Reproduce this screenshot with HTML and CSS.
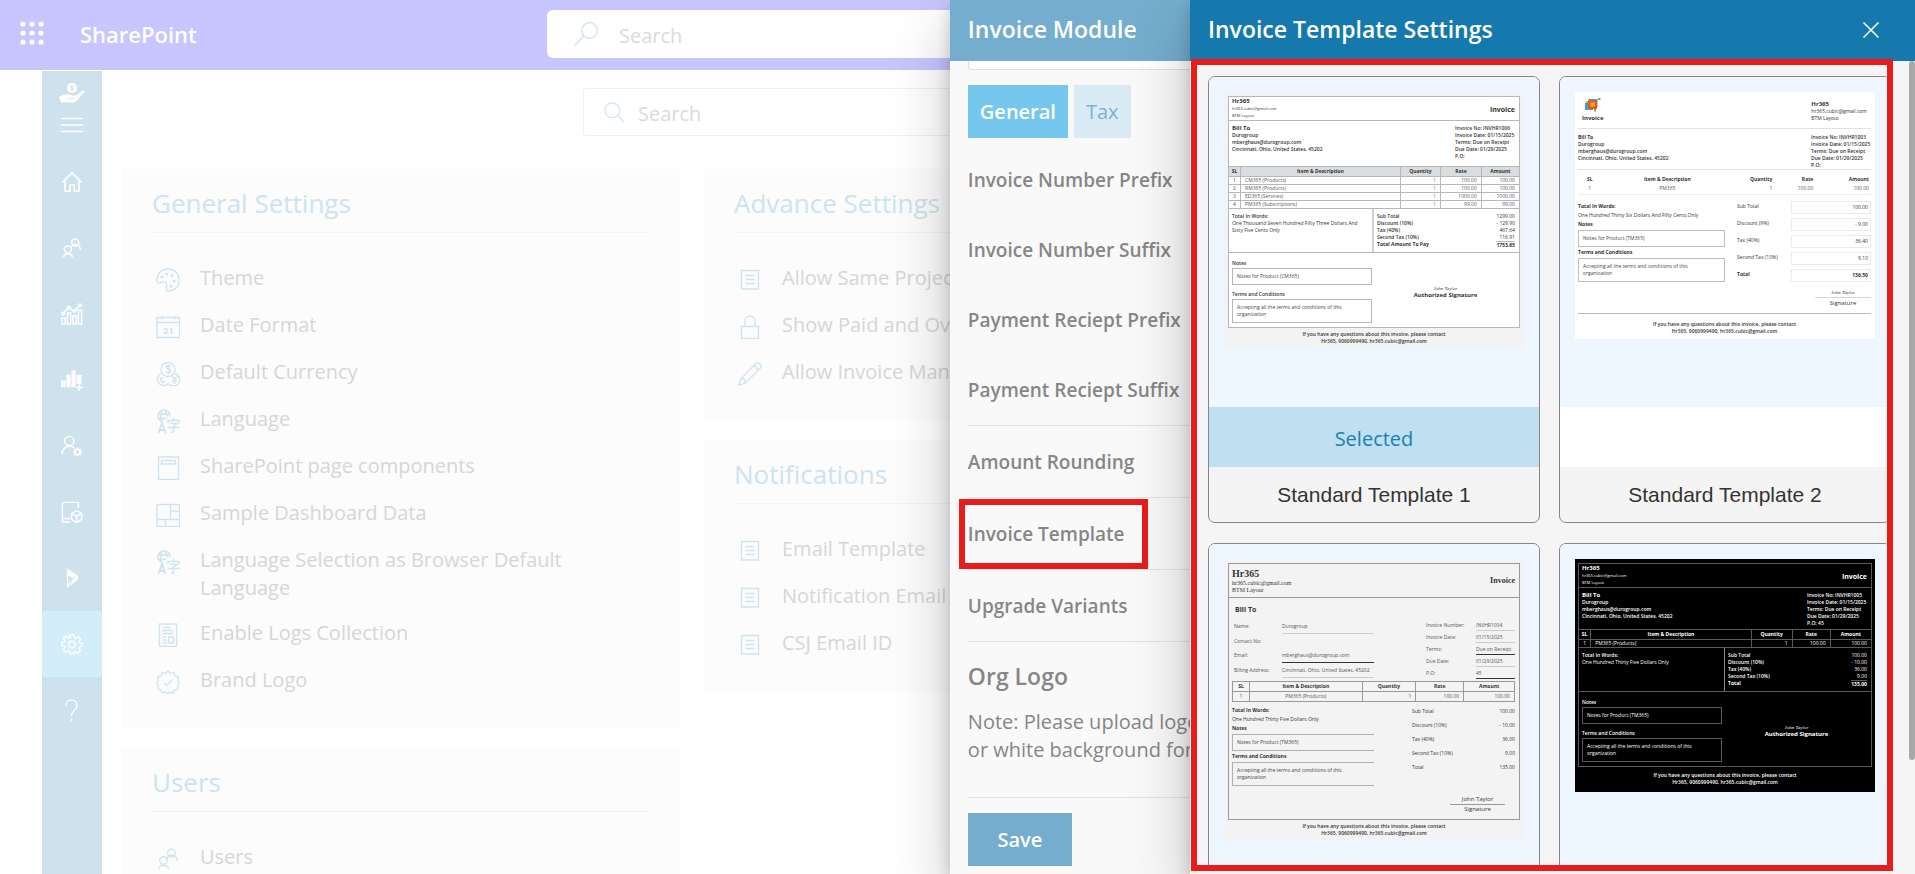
FILE: index.html
```html
<!DOCTYPE html>
<html lang="en">
<head>
<meta charset="utf-8">
<title>Invoice Template Settings</title>
<link rel="stylesheet" href="styles.css">
</head>
<body>
<svg class="defs" aria-hidden="true">
  <symbol id="i-people" viewBox="0 0 24 24"><circle cx="15.5" cy="6" r="3.8"/><circle cx="7.5" cy="13.5" r="3.8"/><path d="M2.5 22a5.200 5.200 0 0 1 10 0M10.500 13a5.200 5.200 0 0 1 10.500 1"/></symbol>
  <symbol id="i-lang" viewBox="0 0 24 24"><path d="M6.500 12.500A6 6 0 1 1 14 7.500M1.500 5h12M1.500 9.500h9M6 1.500c-2 3-2 8 0 11M9 1.500c1.500 2 2 4 2 6"/><path d="M2.500 24L6 14l3.500 10M3.700 21h4.600" stroke-width="1.800"/><path d="M17.500 9v2M12 14v-2.500h11V14M14 14.500h7l-3.500 3V23h-2.500M11.500 18.500h12" stroke-width="1.500"/></symbol>
  <symbol id="i-list" viewBox="0 0 24 24"><path d="M3.500 2.500h17v18.500h-17zM7.500 7.500h9M7.500 11.500h9M7.500 15.500h9"/></symbol>
  <symbol id="i-gear" viewBox="0 0 24 24"><path d="M10 2h4l.6 3 1.800.8L19 4l2.600 2.700-1.700 2.500.6 1.700 2.500.6v3l-2.700.7-.7 1.800 1.500 2.500-2.500 2.500-2.500-1.500-1.800.7L13.500 23h-3l-.8-2.800-1.800-.7-2.500 1.500L3 18.500 4.400 16l-.7-1.800L1 13.500v-3l2.700-.6.7-1.700L2.800 5.700 5 3.500l2.600 1.600L9.400 5z"/><circle cx="12" cy="12.500" r="3.600"/></symbol>
</svg>

<div class="page">
  <header class="topbar">
    <div class="brand">
      <button class="waffle" aria-label="App launcher"><svg viewBox="0 0 24 24"><g fill="#fff"><circle cx="3" cy="3" r="2.600"/><circle cx="12" cy="3" r="2.600"/><circle cx="21" cy="3" r="2.600"/><circle cx="3" cy="12" r="2.600"/><circle cx="12" cy="12" r="2.600"/><circle cx="21" cy="12" r="2.600"/><circle cx="3" cy="21" r="2.600"/><circle cx="12" cy="21" r="2.600"/><circle cx="21" cy="21" r="2.600"/></g></svg></button>
      <a class="brand-name" href="#">SharePoint</a>
    </div>
    <label class="search search-top"><svg class="ic" viewBox="0 0 24 24"><circle cx="15.500" cy="8.500" r="7.800"/><path d="M10 14L.5 23.500"/></svg><input type="text" placeholder="Search" aria-label="Search SharePoint"></label>
  </header>

  <div class="main">
    <nav class="sidebar">
      <div class="side-head">
        <svg class="ic-hand" viewBox="0 0 26 20"><circle cx="13" cy="5" r="5" fill="#fff"/><path d="M14.700 3.200c-1-1-3.300-.8-3.200.5.100 1.400 3.200.9 3.200 2.400 0 1.300-2.400 1.500-3.400.4M13 1.800v6.400" fill="none" stroke="#cee2ed"/><path d="M0 14l5-2.600h5.500l3 1.200h3.500l5.500-4.200c1.500-1 3.400-.5 3.400.2L17 18.500l-4 1.300-9-.5L2.500 20z" fill="#fff"/><path d="M9 15.500h6c2 0 3-.8 2.800-2" fill="none" stroke="#cee2ed" stroke-width=".8"/></svg>
        <button class="burger" aria-label="Menu"><svg viewBox="0 0 22 16"><path d="M0 1.500h22M0 8h22M0 14.500h22" stroke="#fff" stroke-width="1.500"/></svg></button>
      </div>
      <a class="side-link" href="#" aria-label="Home"><svg class="ic" viewBox="0 0 24 24"><path d="M1.500 12.500L12 2l10.500 10.500M4.500 10.500V22h5.500v-7h4.500v7h5V10.500" stroke-width="1.800"/></svg></a>
      <a class="side-link" href="#" aria-label="Customers"><svg class="ic"><use href="#i-people"/></svg></a>
      <a class="side-link" href="#" aria-label="Reports"><svg class="ic" viewBox="0 0 24 24"><path d="M1 16.500h3.500V23H1zM7 11h3.500v12H7zM13 14h3.500v9H13zM19 8h3.500v15H19zM3 10.500l5-5M9.500 6l4 2.500M15.500 7.500l4-4"/><circle cx="2.500" cy="11.500" r="1.500"/><circle cx="8.700" cy="5" r="1.500"/><circle cx="14.500" cy="8.500" r="1.500"/><circle cx="20.700" cy="2.500" r="1.500"/></svg></a>
      <a class="side-link" href="#" aria-label="Add report"><svg class="ic" viewBox="0 0 24 24"><path d="M0 12.500h5V20H0zM6 6h4.500v14H6zM11.500 1.500H16V20h-4.500zM17 6.500h5.500V16H17z" fill="#fff" stroke="none"/><path d="M20 16.500v7.500M16.500 20.200H24" stroke-width="1.800"/></svg></a>
      <a class="side-link" href="#" aria-label="User settings"><svg class="ic" viewBox="0 0 24 24"><circle cx="9" cy="6.500" r="5"/><path d="M1 21c0-5 4-9 8.500-9 2 0 3.500.8 5 2"/><circle cx="18" cy="18.500" r="2.800" stroke-width="1.800"/><path d="M18 13.500v2M18 21.500v2M13 18.500h2M21 18.500h2M14.500 15l1.400 1.400M20.100 20.600l1.400 1.400M21.500 15l-1.400 1.400M15.900 20.600L14.500 22"/></svg></a>
      <a class="side-link" href="#" aria-label="Products"><svg class="ic" viewBox="0 0 24 24"><path d="M19 7.500V1.500H3.500C2 1.500 1.500 2.500 1.500 4v17c0 1 .7 2 2 2H10M2 19h8"/><path d="M17 10.500l5.500 3v6.500L17 23.500 11.500 20v-6.500zM11.500 13.500l5.500 3 5.500-3M17 16.500v7" stroke-width="1.600"/></svg></a>
      <a class="side-link" href="#" aria-label="Dynamics"><svg class="ic" viewBox="0 0 24 24"><path d="M6.500 1.500L18.500 9.500v4L7 23l-.5-.5zM8 9v9.500l5-6z" fill="#fff" stroke="none" fill-rule="evenodd"/><path d="M8 22L14.500 10" stroke="#cee2ed" stroke-width="1"/></svg></a>
      <a class="side-link active" href="#" aria-label="Settings"><svg class="ic"><use href="#i-gear"/></svg></a>
      <a class="side-link" href="#" aria-label="Help"><svg class="ic" viewBox="0 0 24 24"><path d="M5.500 7c0-3.500 2.500-5.800 6-5.800s6 2.300 6 5.800c0 4.500-6 5.500-6 11.500M11.500 21.500V24" stroke-width="1.500"/></svg></a>
    </nav>

    <div class="content">
      <label class="search search-page"><svg class="ic" viewBox="0 0 24 24"><circle cx="9.500" cy="9.500" r="8.500"/><path d="M15.500 15.500L23 23"/></svg><input type="text" placeholder="Search" aria-label="Search settings"></label>
      <div class="columns">
        <div class="column">
          <section class="card">
            <h2>General Settings</h2>
            <ul class="items">
              <li><svg class="ic" viewBox="0 0 24 24"><path d="M1 14C0 7 5 1 12 1s11.500 5 11 12-6 10.500-11 10c-4-1 .5-5-2-8.500C7.500 12 3 17 1 14z"/><g class="dots"><circle cx="6" cy="9" r="1.500"/><circle cx="10.500" cy="6" r="1.500"/><circle cx="16" cy="7.500" r="1.500"/><circle cx="18" cy="13" r="1.500"/><circle cx="15" cy="18" r="1.500"/></g></svg><a href="#">Theme</a></li>
              <li><svg class="ic" viewBox="0 0 24 24"><path d="M1 2.500h22.500v20H1zM1 7.500h22.500M6 1v3M19 1v3"/><text x="7" y="18.500" font-size="9" font-weight="700">21</text></svg><a href="#">Date Format</a></li>
              <li><svg class="ic" viewBox="0 0 24 24"><circle cx="12" cy="7.500" r="7"/><path d="M5 11.500a6.300 6.300 0 1 0 8 9M19 11.500a6.300 6.300 0 1 1-6 10.500M9 19.500c-2 2-5 0-4-3M3.500 16h4M16 14l2.500 3.500L21 14M18.500 17.500V22M16 19h5"/><text x="9" y="12" font-size="12" font-weight="600">$</text></svg><a href="#">Default Currency</a></li>
              <li><svg class="ic"><use href="#i-lang"/></svg><a href="#">Language</a></li>
              <li><svg class="ic" viewBox="0 0 24 24"><path d="M2.500 1h20v22.500h-20zM5.500 4.500h14v3.500h-14z"/></svg><a href="#">SharePoint page components</a></li>
              <li><svg class="ic" viewBox="0 0 24 24"><path d="M1 1.500h22.500v22H1zM1 16.500h22.500M14.500 1.500v15M14.500 8h9M9.500 16.500v7"/></svg><a href="#">Sample Dashboard Data</a></li>
              <li><svg class="ic"><use href="#i-lang"/></svg><a href="#">Language Selection as Browser Default Language</a></li>
              <li><svg class="ic" viewBox="0 0 24 24"><path d="M3.500 1h17v22.500h-17zM6.500 4.500h8M6.500 7.500h11M6.500 10.500h11M6.500 14h4M6.500 17h4M6.500 20h4M12.500 14h5v6h-5z"/></svg><a href="#">Enable Logs Collection</a></li>
              <li><svg class="ic" viewBox="0 0 24 24"><path d="M12 1l2.500 2.500 3.500-1 1 3.500 3 1-.5 3.500L23.500 13 21.500 16l.5 3-3.500 1L17 23l-3-.8L12 24l-2.500-2L6 23l-1.200-3.200L2 19l.5-3.300L.5 13l2-2.500L2 7l3-1 1-3.500 3.500 1zM8 12.500l3 3L16.500 9.500"/></svg><a href="#">Brand Logo</a></li>
            </ul>
          </section>
          <section class="card">
            <h2>Users</h2>
            <ul class="items"><li><svg class="ic"><use href="#i-people"/></svg><a href="#">Users</a></li></ul>
          </section>
        </div>
        <div class="column">
          <section class="card">
            <h2>Advance Settings</h2>
            <ul class="items">
              <li><svg class="ic"><use href="#i-list"/></svg><a href="#">Allow Same Project</a></li>
              <li><svg class="ic" viewBox="0 0 24 24"><path d="M3.500 11.500h17v12h-17zM7 11.500V6c0-3 2.200-5 5-5s5 2 5 5v5.500"/></svg><a href="#">Show Paid and Overdue</a></li>
              <li><svg class="ic" viewBox="0 0 24 24"><path d="M.8 23.200L3 16.500 17.500 2c3-3 7.500 1.500 4.500 4.500L7.500 21zM3 16.500c3 0 4.500 1.500 4.500 4.500M16 3.500l4.500 4.500"/></svg><a href="#">Allow Invoice Manager</a></li>
            </ul>
          </section>
          <section class="card">
            <h2>Notifications</h2>
            <ul class="items">
              <li><svg class="ic"><use href="#i-list"/></svg><a href="#">Email Template</a></li>
              <li><svg class="ic"><use href="#i-list"/></svg><a href="#">Notification Email</a></li>
              <li><svg class="ic"><use href="#i-list"/></svg><a href="#">CSJ Email ID</a></li>
            </ul>
          </section>
        </div>
      </div>
    </div>
  </div>
</div>

<aside class="panel panel-module">
  <header class="panel-head"><h1>Invoice Module</h1></header>
  <div class="module-body">
    <div class="field-end"></div>
    <div class="tabs"><button class="tab on">General</button><button class="tab">Tax</button></div>
    <div class="labels"><p>Invoice Number Prefix</p><p>Invoice Number Suffix</p><p>Payment Reciept Prefix</p><p>Payment Reciept Suffix</p></div>
    <div class="row">Amount Rounding</div>
    <div class="row marked">Invoice Template</div>
    <div class="row">Upgrade Variants</div>
    <h3>Org Logo</h3>
    <p class="note">Note: Please upload logo<br>or white background for</p>
    <div class="actions"><button class="save">Save</button></div>
  </div>
</aside>

<aside class="panel panel-template">
  <header class="panel-head"><h1>Invoice Template Settings</h1><button class="close" aria-label="Close"><svg viewBox="0 0 16 16"><path d="M.5.5l15 15M15.500.5l-15 15" stroke="#fff" stroke-width="1.500"/></svg></button></header>
  <div class="template-body">
    <div class="templates">

      <article class="tpl">
        <div class="preview">
          <div class="inv inv-a">
            <div class="frame">
              <div class="i-head"><div><b class="t6">Hr365</b><span class="t4">hr365.cubic@gmail.com</span><span class="t4">BTM Layout</span></div><b class="t7">Invoice</b></div>
              <div class="i-bill"><div><b class="t6">Bill To</b><span>Durogroup</span><span>mberghaus@durogroup.com</span><span>Cincinnati, Ohio, United States, 45202</span></div><div class="i-meta"><span>Invoice No: INVHR1006</span><span>Invoice Date: 01/15/2025</span><span>Terms: Due on Receipt</span><span>Due Date: 01/29/2025</span><span>P.O:</span></div></div>
              <table><colgroup><col class="w4"><col class="w55"><col class="w14"><col class="w14"><col class="w13"></colgroup>
                <tr><th>SL</th><th>Item &amp; Description</th><th>Quantity</th><th>Rate</th><th>Amount</th></tr>
                <tr><td>1</td><td>CM365 (Products)</td><td>1</td><td>100.00</td><td>100.00</td></tr>
                <tr><td>2</td><td>RM365 (Products)</td><td>1</td><td>100.00</td><td>100.00</td></tr>
                <tr><td>3</td><td>ED365 (Services)</td><td>1</td><td>1000.00</td><td>1000.00</td></tr>
                <tr><td>4</td><td>PM365 (Subscriptions)</td><td>1</td><td>99.00</td><td>99.00</td></tr>
              </table>
              <div class="i-total"><div class="words"><span class="dark">Total In Words:</span><span>One Thousand Seven Hundred Fifty Three Dollars And Sixty Five Cents Only</span></div>
                <dl><dt>Sub Total</dt><dd>1299.00</dd><dt>Discount (10%)</dt><dd>- 129.90</dd><dt>Tax (40%)</dt><dd>467.64</dd><dt>Second Tax (10%)</dt><dd>116.91</dd><dt class="sum">Total Amount To Pay</dt><dd class="sum line">1753.65</dd></dl></div>
              <div class="i-notes"><div><span class="dark">Notes</span><div class="box">Notes for Product (CM365)</div><span class="dark">Terms and Conditions</span><div class="box">Accepting all the terms and conditions of this organization</div></div><div class="sign"><i>John Taylor</i><b>Authorized Signature</b></div></div>
            </div>
            <p class="i-foot">If you have any questions about this invoice, please contact<br>Hr365, 9060999490, hr365.cubic@gmail.com</p>
          </div>
        </div>
        <button class="pick chosen">Selected</button>
        <h4>Standard Template 1</h4>
      </article>

      <article class="tpl">
        <div class="preview">
          <div class="inv inv-b">
            <div class="b-head"><div class="b-logo"><svg viewBox="0 0 16 14"><path d="M3.500 1h9v8h-9z" fill="#3aa0dc"/><path d="M0 5h8v7H0z" fill="#3aa0dc"/><path d="M3 2.500h9v8.500H3z" fill="#f4511e"/><path d="M5.500 4.500h4.500v4H5.500z" fill="#ffb300"/><path d="M13 0h2.500v2H13zM9 11h2v2.500H9zM1 3.500h2v1.500H1z" fill="#7cb342"/></svg><b class="t6">Invoice</b></div><div class="b-org"><b class="t6">Hr365</b><span>hr365.cubic@gmail.com</span><span>BTM Layout</span></div></div>
            <div class="b-bill"><div><b>Bill To</b><span>Durogroup</span><span>mberghaus@durogroup.com</span><span>Cincinnati, Ohio, United States, 45202</span></div><div class="i-meta"><span>Invoice No: INVHR1003</span><span>Invoice Date: 01/15/2025</span><span>Terms: Due on Receipt</span><span>Due Date: 01/29/2025</span><span>P.O:</span></div></div>
            <table><colgroup><col class="w8"><col class="w45"><col class="w14"><col class="w14"><col class="w19"></colgroup>
              <tr><th>SL</th><th>Item &amp; Description</th><th>Quantity</th><th>Rate</th><th>Amount</th></tr>
              <tr><td>1</td><td>PM365</td><td>1</td><td>100.00</td><td>100.00</td></tr></table>
            <div class="b-total"><div class="words"><b>Total In Words:</b><span>One Hundred Thirty Six Dollars And Fifty Cents Only</span><b>Notes</b><div class="box">Notes for Product (TM365)</div><b>Terms and Conditions</b><div class="box">Accepting all the terms and conditions of this organization</div></div>
              <dl><dt>Sub Total</dt><dd>100.00</dd><dt>Discount (9%)</dt><dd>- 9.00</dd><dt>Tax (40%)</dt><dd>36.40</dd><dt>Second Tax (10%)</dt><dd>9.10</dd><dt class="sum">Total</dt><dd class="sum">136.50</dd></dl></div>
            <div class="b-sign"><i>John Taylor</i><span>Signature</span></div>
            <p class="i-foot">If you have any questions about this invoice, please contact<br>Hr365, 9060999490, hr365.cubic@gmail.com</p>
          </div>
        </div>
        <button class="pick" aria-label="Select Standard Template 2"></button>
        <h4>Standard Template 2</h4>
      </article>

      <article class="tpl">
        <div class="preview">
          <div class="inv inv-c">
            <div class="frame">
              <div class="c-head"><div><b class="t9">Hr365</b><span>hr365.cubic@gmail.com</span><span>BTM Layout</span></div><b class="t8">Invoice</b></div>
              <b class="c-bill t7">Bill To</b>
              <div class="c-info">
                <dl class="c-left"><dt>Name:</dt><dd>Durogroup</dd><dt>Contact No:</dt><dd class="none"></dd><dt>Email:</dt><dd class="black">mberghaus@durogroup.com</dd><dt>Billing Address:</dt><dd>Cincinnati, Ohio, United States, 45202</dd></dl>
                <dl class="c-right"><dt>Invoice Number:</dt><dd>INVHR1004</dd><dt>Invoice Date:</dt><dd>01/15/2025</dd><dt>Terms:</dt><dd class="black">Due on Receipt</dd><dt>Due Date:</dt><dd>01/29/2025</dd><dt>P.O:</dt><dd class="black">45</dd></dl>
              </div>
              <table><colgroup><col class="w6"><col class="w40"><col class="w19"><col class="w17"><col class="w18"></colgroup>
                <tr><th>SL</th><th>Item &amp; Description</th><th>Quantity</th><th>Rate</th><th>Amount</th></tr>
                <tr><td>1</td><td>PM365 (Products)</td><td>1</td><td>100.00</td><td>100.00</td></tr></table>
              <div class="c-total"><div class="words"><b>Total In Words:</b><span>One Hundred Thirty Five Dollars Only</span><b>Notes</b><div class="box">Notes for Product (TM365)</div><b>Terms and Conditions</b><div class="box">Accepting all the terms and conditions of this organization</div></div>
                <dl><dt>Sub Total</dt><dd>100.00</dd><dt>Discount (10%)</dt><dd>- 10.00</dd><dt>Tax (40%)</dt><dd>36.00</dd><dt>Second Tax (10%)</dt><dd>9.00</dd><dt>Total</dt><dd>135.00</dd></dl></div>
              <div class="c-sign"><span>John Taylor</span><span>Signature</span></div>
            </div>
            <p class="i-foot">If you have any questions about this invoice, please contact<br>Hr365, 9060999490, hr365.cubic@gmail.com</p>
          </div>
        </div>
        <button class="pick" aria-label="Select Standard Template 3"></button>
      </article>

      <article class="tpl">
        <div class="preview">
          <div class="inv inv-a inv-d">
            <div class="frame">
              <div class="i-head"><div><b class="t6">Hr365</b><span class="t4">hr365.cubic@gmail.com</span><span class="t4">BTM Layout</span></div><b class="t7">Invoice</b></div>
              <div class="i-bill"><div><b class="t6">Bill To</b><span>Durogroup</span><span>mberghaus@durogroup.com</span><span>Cincinnati, Ohio, United States, 45202</span></div><div class="i-meta"><span>Invoice No: INVHR1005</span><span>Invoice Date: 01/15/2025</span><span>Terms: Due on Receipt</span><span>Due Date: 01/29/2025</span><span>P.O: 45</span></div></div>
              <table><colgroup><col class="w4"><col class="w55"><col class="w14"><col class="w13"><col class="w14"></colgroup>
                <tr><th>SL</th><th>Item &amp; Description</th><th>Quantity</th><th>Rate</th><th>Amount</th></tr>
                <tr><td>1</td><td>PM365 (Products)</td><td>1</td><td>100.00</td><td>100.00</td></tr>
              </table>
              <div class="i-total"><div class="words"><span class="dark">Total In Words:</span><span>One Hundred Thirty Five Dollars Only</span></div>
                <dl><dt>Sub Total</dt><dd>100.00</dd><dt>Discount (10%)</dt><dd>- 10.00</dd><dt>Tax (40%)</dt><dd>36.00</dd><dt>Second Tax (10%)</dt><dd>9.00</dd><dt class="sum">Total</dt><dd class="sum line">135.00</dd></dl></div>
              <div class="i-notes"><div><span class="dark">Notes</span><div class="box">Notes for Product (TM365)</div><span class="dark">Terms and Conditions</span><div class="box">Accepting all the terms and conditions of this organization</div></div><div class="sign"><i>John Taylor</i><b>Authorized Signature</b></div></div>
            </div>
            <p class="i-foot">If you have any questions about this invoice, please contact<br>Hr365, 9060999490, hr365.cubic@gmail.com</p>
          </div>
        </div>
        <button class="pick" aria-label="Select Standard Template 4"></button>
      </article>

    </div>
  </div>
  <div class="outline"></div>
  <div class="scrollbar"></div>
</aside>
</body>
</html>
```
FILE: styles.css
```css
*, *::after { box-sizing: border-box; }
body { margin: 0; height: 100vh; overflow: hidden; background: #fff; font-family: "Open Sans", "Noto Sans", sans-serif; font-size: 20px; color: #d6d6d6; }
h1, h2, h3, h4, p, ul, dl, dd { margin: 0; padding: 0; font-weight: 400; }
button, input { font: inherit; border: 0; padding: 0; background: none; }
a { color: inherit; text-decoration: none; }
.defs { display: none; }
.ic { width: 24px; height: 24px; flex: none; fill: none; stroke: #cde3ef; stroke-width: 1.3; }
.ic text, .ic .dots { fill: #cde3ef; stroke: none; }

/* Page behind the panels */
.page { height: 100%; display: flex; flex-direction: column; overflow: hidden; }
.topbar { flex: none; height: 70px; display: grid; grid-template-columns: 1fr minmax(0, 821px) 1fr; background: #c8c6ff; padding: 10px 0 12px; }
.brand { display: flex; align-items: center; gap: 36px; padding-left: 20px; }
.waffle, .waffle svg { display: block; width: 24px; height: 24px; }
.waffle { margin-bottom: 2px; }
.brand-name { color: #fff; font-weight: 600; font-size: 22px; }
.search { display: flex; align-items: center; background: #fff; height: 48px; }
.search input { flex: 1; min-width: 0; outline: 0; padding-top: 2px; }
.search input::placeholder { color: #dadada; opacity: 1; }
.search-top { border-radius: 6px; padding-left: 27px; gap: 21px; }
.main { flex: 1; min-height: 0; display: flex; padding-left: 42px; margin-top: 1px; }
.sidebar { flex: none; width: 60px; background: #cee2ed; }
.side-head { height: 78px; padding-top: 12px; display: flex; flex-direction: column; align-items: center; gap: 14px; }
.ic-hand { width: 26px; height: 20px; }
.burger, .burger svg { display: block; width: 22px; height: 16px; }
.side-link { height: 66px; display: flex; align-items: center; justify-content: center; border-radius: 3px; }
.side-link .ic { width: 22px; height: 22px; stroke: #fff; stroke-width: 1.6; }
.side-link.active { background: #d3edfb; }
.content { flex: 1; min-width: 0; padding: 17px 71px 0 20px; }
.search-page { width: 100%; max-width: 800px; height: 48px; margin: 0 auto 33px; border: 1px solid #f0f0f0; border-radius: 3px; padding-left: 20px; gap: 13px; }
.search-page .ic { width: 21px; height: 21px; }
.columns { display: grid; grid-template-columns: repeat(3, 1fr); gap: 24px; align-items: start; }
.column { display: flex; flex-direction: column; gap: 20px; }
.card { background: #fcfcfc; padding: 16px 30px 15px; }
.card h2 { font-size: 26px; line-height: 36px; padding-bottom: 11px; border-bottom: 1px solid #f2f2f2; color: #cde3ef; }
.items { list-style: none; padding-top: 31px; }
.items li { display: flex; gap: 20px; min-height: 47px; padding: 0 60px 17px 4px; line-height: 28px; }
.items .ic { margin-top: 4px; }

/* Panels */
.panel { position: absolute; top: 0; right: 0; bottom: 0; display: flex; flex-direction: column; box-shadow: 0 26px 58px rgba(0, 0, 0, .22), 0 5px 14px rgba(0, 0, 0, .18); }
.panel-head { flex: none; height: 61px; padding: 0 36px 4px 18px; display: flex; align-items: center; justify-content: space-between; color: #fff; }
.panel-head h1 { font-size: 23px; line-height: 54px; font-weight: 600; }
.panel-module { width: 50.4%; background: #f9f9f9; color: #868686; }
.panel-module .panel-head { background: #74adcd; }
.module-body { flex: 1; min-height: 0; overflow: hidden; padding: 0 18px; }
.field-end { height: 9px; background: #fff; border: 1px solid #dedede; border-top: 0; border-radius: 0 0 3px 3px; }
.tabs { display: flex; gap: 6px; margin: 15px 0 7px; }
.tab { height: 53px; padding: 0 12px; background: #daebf6; color: #7bb3cf; }
.tab.on { background: #75c7ee; color: #fff; font-weight: 600; }
.labels { border-bottom: 1px solid #e3e3e3; }
.labels p { line-height: 70px; font-size: 19px; font-weight: 600; }
.row { position: relative; height: 72px; line-height: 73px; font-size: 19px; font-weight: 600; border-bottom: 1px solid #e3e3e3; }
.marked::after { content: ""; position: absolute; left: -9px; top: 1px; width: 189px; height: 70px; border: 6px solid #e71c1c; }
.module-body h3 { margin-top: 18px; font-size: 23px; line-height: 32px; font-weight: 600; }
.note { margin-top: 16px; line-height: 28px; white-space: nowrap; }
.actions { margin-top: 33px; padding-top: 15px; border-top: 1px solid #e3e3e3; }
.save { width: 104px; height: 53px; background: #74adcd; color: #fff; font-weight: 600; }

.panel-template { width: 37.86%; background: #f5f5f5; }
.panel-template .panel-head { background: #1679ad; }
.close, .close svg { display: block; width: 16px; height: 16px; }
.close { margin-top: 3px; }
.template-body { flex: 1; min-height: 0; overflow: hidden; margin-bottom: 4px; padding: 15px 24px 0 18px; }
.templates { display: grid; grid-template-columns: 1fr 1fr; gap: 20px 19px; }
.tpl { border: 1px solid #868686; border-radius: 7px; overflow: hidden; background: #f4f4f4; text-align: center; }
.preview { height: 330px; padding: 15px; background: #eef7ff; }
.pick { display: block; width: 100%; height: 60px; background: #fff; }
.pick.chosen { background: #bee0f0; color: #1c7fb0; padding-top: 2px; }
.tpl h4 { font: 21px/55px "Liberation Sans", Arial, sans-serif; color: #333; }
.outline { position: absolute; top: 59px; right: 22px; bottom: 3px; left: 1px; border: 6px solid #e71c1c; pointer-events: none; }
.scrollbar { position: absolute; top: 61px; right: 0; width: 6px; height: 80%; border-radius: 3px; background: #a8a8a8; }

/* Invoice previews */
.inv { text-align: left; font-size: 5px; line-height: 7px; color: #333; background: #f3f3f3; padding: 4px; max-width: 300px; margin: 0 auto; --line: #b5b8ba; }
.inv span, .inv b { display: block; }
.inv b { font-weight: 700; }
.t4 { font-size: 4px; }
.t6 { font-size: 6px; }
.t7 { font-size: 7px; }
.t8 { font-size: 8px; }
.t9 { font-size: 10px; }
.inv table { width: 100%; table-layout: fixed; border-collapse: collapse; }
.inv th, .inv td { padding: 0 4px; line-height: 7px; height: 8px; font-size: 5px; white-space: nowrap; }
.inv th { font-weight: 700; text-align: center; padding: 0; }
.inv td { text-align: right; color: #555; }
.w4 { width: 4%; }
.w6 { width: 6%; }
.w8 { width: 8%; }
.w13 { width: 13%; }
.w14 { width: 14%; }
.w17 { width: 17%; }
.w18 { width: 18%; }
.w19 { width: 19%; }
.w40 { width: 40%; }
.w45 { width: 45%; }
.w55 { width: 55%; }
.inv dl { display: grid; grid-template-columns: 1fr auto; align-content: start; }
.inv dd { text-align: right; }
.inv .sum { font-weight: 700; }
.inv .box { border: 1px solid var(--line); padding: 4px 20px 4px 4px; color: #444; }
.inv i { font-family: "Liberation Serif", serif; font-style: italic; }
.i-foot { text-align: center; padding-top: 3px; font-weight: 600; }

.inv-a .frame { border: 1px solid var(--line); background: #fff; }
.i-head { display: flex; justify-content: space-between; align-items: center; height: 24px; padding: 0 4px 0 3px; border-bottom: 1px solid var(--line); }
.i-head .t7 { padding-top: 2px; }
.i-bill { display: flex; justify-content: space-between; height: 45px; padding: 4px 4px 0 3px; font-weight: 600; }
.i-meta { min-width: 60px; font-weight: 600; white-space: nowrap; }
.inv-a th, .inv-a td { border: 1px solid var(--line); }
.inv-a th { background: #d9dde0; height: 10px; }
.inv-a tr > :first-child { border-left: 0; padding: 0; text-align: center; }
.inv-a tr > :last-child { border-right: 0; }
.inv-a td:nth-child(2) { text-align: left; }
.inv-a td:nth-child(3) { color: #b06a30; }
.i-total { display: grid; grid-template-columns: 1fr 1fr; height: 44px; border-bottom: 1px solid var(--line); }
.i-total .words { padding: 4px 8px 0 3px; border-right: 2px solid #d0d0d0; }
.i-total dl { padding: 4px 4px 0 3px; font-weight: 600; }
.line { border-top: 1px solid var(--line); }
.inv .dark { font-weight: 600; color: #333; }
.i-notes { display: grid; grid-template-columns: 140px 1fr; padding: 7px 0 4px 3px; }
.i-notes .box { margin-top: 1px; }
.i-notes .box + .dark { margin-top: 6px; }
.sign { align-self: center; text-align: center; }
.sign b { font-size: 6px; }

.inv-b { background: #fff; padding: 5px 4px 4px 3px; --line: #bdbdbd; }
.b-head, .b-bill { display: flex; justify-content: space-between; border-bottom: 1px solid #e2e2e2; }
.b-head { height: 32px; padding: 2px 4px 0 4px; }
.b-logo { text-align: center; }
.b-logo svg { display: block; width: 16px; height: 14px; margin: -1px auto 3px; }
.b-org { padding-top: 2px; }
.b-bill { height: 41px; padding-top: 5px; font-weight: 600; }
.inv-b th, .inv-b td { height: 10px; }
.inv-b table { margin-top: 4px; border-bottom: 1px solid #eee; }
.inv-b tr > :nth-child(n+3) { text-align: right; padding-right: 2px; }
.inv-b tr > :nth-child(-n+2) { text-align: center; }
.b-total { display: grid; grid-template-columns: 147px 1fr; gap: 12px; padding-top: 6px; }
.b-total .words { padding-top: 2px; }
.b-total .words b { margin-top: 2px; }
.b-total .words b:first-child { margin: 0; }
.b-total .words span { margin-top: 2px; }
.b-total .box { margin: 2px 0; }
.b-total dl { grid-template-columns: 54px 1fr; row-gap: 4px; line-height: 11px; }
.b-total dd { border: 1px solid #eaeaea; padding: 0 2px; }
.b-sign { width: 56px; margin: 4px 0 0 auto; text-align: center; line-height: 8px; }
.b-sign span { padding-top: 1px; border-top: 1px solid #d5d5d5; font-size: 6px; }
.inv-b .i-foot { margin-top: 6px; border-top: 1px solid #bbb; padding-top: 7px; }

.inv-c { --line: #b0b0b0; }
.inv-c .frame { border: 1px solid #999; padding-bottom: 5px; }
.c-head { display: flex; justify-content: space-between; align-items: center; height: 34px; padding: 0 4px 0 3px; border-bottom: 1px solid #999; font-family: "Liberation Serif", serif; }
.inv .c-head .t9 { line-height: 12px; }
.inv .c-head span { font-size: 6px; line-height: 7px; }
.inv .c-bill { padding: 8px 0 0 6px; line-height: 8px; }
.c-info { display: flex; justify-content: space-between; height: 66px; padding: 6px 4px 0 5px; }
.inv .c-left, .inv .c-right { grid-template-columns: 48px 92px; line-height: 13px; row-gap: 1px; color: #555; }
.inv .c-right { grid-template-columns: 50px 39px; line-height: 10px; }
.c-info dd { text-align: left; border-bottom: 1px solid #ccc; white-space: nowrap; }
.inv .c-info .none { border: 0; }
.inv .c-info .black { border-color: #333; }
.inv-c table { width: calc(100% - 7px); margin: 1px 4px 0 3px; }
.inv-c th, .inv-c td { border: 1px solid #999; height: 10px; }
.inv-c tr > :nth-child(-n+2) { text-align: center; }
.c-total { display: grid; grid-template-columns: 142px 1fr; gap: 38px; padding: 5px 4px 0 3px; }
.c-total .words b + span, .c-total .words span + b { margin-top: 2px; }
.c-total .words .box { margin: 2px 0; border-right: 0; }
.c-total dl { margin-top: -2px; line-height: 13px; row-gap: 1px; }
.c-sign { width: 55px; margin: 7px 14px 0 auto; text-align: center; line-height: 9px; font-size: 6px; }
.c-sign span + span { border-top: 1px solid #999; }

.inv-d { background: #000; color: #fff; padding-bottom: 6px; --line: #5a5a5a; }
.inv-d .frame, .inv-d th { background: #000; }
.inv-d .frame { margin: 0 -1px; }
.inv-d .i-bill { height: 41px; }
.inv-d td, .inv-d .box, .inv-d td:nth-child(3), .inv.inv-d .dark { color: #fff; }
.inv-d .i-total .words { border-right: 1px solid #888; }
.inv-d .i-foot { padding-top: 5px; }
```
